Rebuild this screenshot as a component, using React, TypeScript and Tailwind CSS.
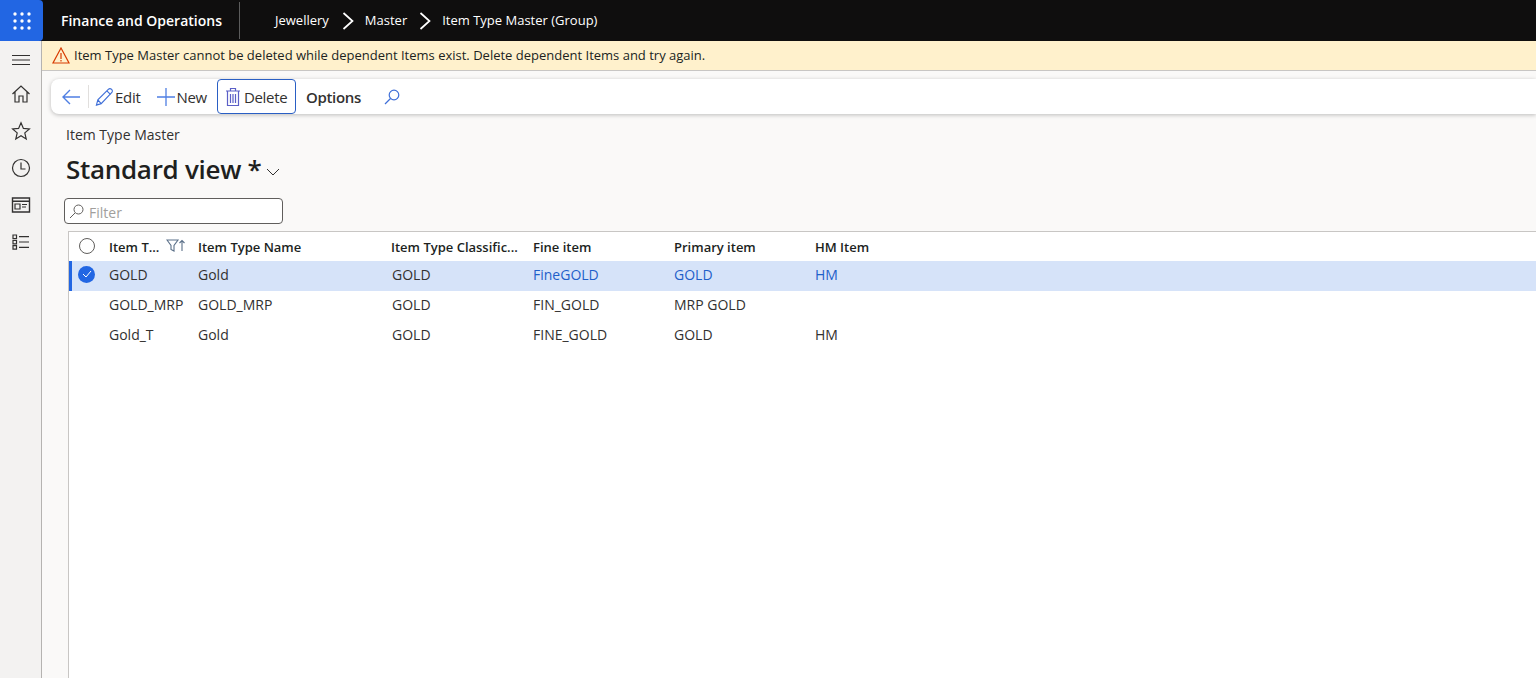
import React from 'react';

const rows = [
  { id: 'GOLD', name: 'Gold', cls: 'GOLD', fine: 'FineGOLD', primary: 'GOLD', hm: 'HM', selected: true },
  { id: 'GOLD_MRP', name: 'GOLD_MRP', cls: 'GOLD', fine: 'FIN_GOLD', primary: 'MRP GOLD', hm: '', selected: false },
  { id: 'Gold_T', name: 'Gold', cls: 'GOLD', fine: 'FINE_GOLD', primary: 'GOLD', hm: 'HM', selected: false },
];

const Waffle = () => (
  <svg width="18" height="18" viewBox="0 0 18 18" fill="#fff">
    {[2, 9, 16].map((y) => [2, 9, 16].map((x) => <circle key={`${x}-${y}`} cx={x} cy={y} r="1.7" />))}
  </svg>
);

const Chevron = () => (
  <svg width="12" height="20" viewBox="0 0 12 20" fill="none" stroke="#fff" strokeWidth="1.7">
    <path d="M1.5 2l9 8-9 8" />
  </svg>
);

const SideIcon = ({ children }: { children: React.ReactNode }) => (
  <div className="h-[37px] w-full flex items-center justify-center">
    <svg width="20" height="20" viewBox="0 0 20 20" fill="none" stroke="#323130" strokeWidth="1.2">
      {children}
    </svg>
  </div>
);

const Sidebar = () => (
  <div className="w-[42px] shrink-0 bg-[#f3f2f1] border-r border-[#b5b3b1] flex flex-col items-center">
    <div className="h-[31px] mt-[3px] w-full flex items-center justify-center">
      <svg width="20" height="12" viewBox="0 0 20 12" stroke="#323130" strokeWidth="1">
        <path d="M1 1.5h18M1 6h18M1 10.5h18" />
      </svg>
    </div>
    <SideIcon>
      <path d="M1.5 10L10 2l8.5 8M4 8v10h4v-6h4v6h4V8" />
    </SideIcon>
    <SideIcon>
      <path d="M10 1.8l2.4 5.6 6 .5-4.6 4 1.4 6L10 14.7l-5.2 3.2 1.4-6-4.6-4 6-.5z" />
    </SideIcon>
    <SideIcon>
      <circle cx="10" cy="10" r="8.5" />
      <path d="M10 4.5V11h4.5" />
    </SideIcon>
    <SideIcon>
      <path d="M1.5 3h17v14h-17zM1.5 6.2h17" strokeWidth="1.4" />
      <path d="M4 9h5v5H4zM11 9.5h5M11 12h4" />
    </SideIcon>
    <SideIcon>
      <path d="M2 3h3.5v3.5H2zM2 8.3h3.5v3.5H2zM2 13.6h3.5v3.5H2zM8 4.700h10M8 10h10M8 15.3h10" />
    </SideIcon>
  </div>
);

const Toolbar = () => (
  <div className="mt-[8px] ml-[9px] h-[35px] bg-white rounded-l-[8px] shadow-[0_1px_4px_rgba(0,0,0,0.25)] flex items-center text-[15px] tracking-[-0.3px] text-[#323130]">
    <div className="w-[37px] flex justify-end pr-[7px]">
      <svg width="20" height="18" viewBox="0 0 20 18" fill="none" stroke="#4f7fe3" strokeWidth="1.4">
        <path d="M19 9H2M9 2L2 9l7 7" />
      </svg>
    </div>
    <div className="w-px h-[23px] bg-[#e1dfdd]" />
    <div className="flex items-center ml-[6px]">
      <svg width="19" height="20" viewBox="0 0 20 20" fill="none" stroke="#3f6fd8" strokeWidth="1.2">
        <path d="M1.5 18.5l1.5-5.5L14 2c1-1 2.5-1 3.5 0s1 2.5 0 3.5L6.5 17zM3 13l3.5 4M12.5 3.5l4 4" />
      </svg>
      <span className="ml-px mt-px">Edit</span>
    </div>
    <div className="flex items-center ml-[17px]">
      <svg width="18" height="18" viewBox="0 0 18 18" stroke="#4f7fe3" strokeWidth="1.3">
        <path d="M0 9h18M9 0v18" />
      </svg>
      <span className="ml-px mt-px">New</span>
    </div>
    <div className="flex items-center ml-[10px] h-[35px] w-[79px] border border-[#2a5fc4] rounded-[4px] pl-[7px]">
      <svg width="16" height="20" viewBox="0 0 16 20" fill="none" stroke="#5b5fc7" strokeWidth="1.2">
        <path d="M1 4h14M5.5 4V1.5h5V4M2.500 4v14.500h11V4" />
        <path d="M5.5 7v9M8 7v9M10.500 7v9" />
      </svg>
      <span className="ml-[3px] mt-px">Delete</span>
    </div>
    <span className="ml-[10px] mt-[2px] font-semibold">Options</span>
    <div className="ml-[23px]">
      <svg width="16" height="16" viewBox="0 0 16 16" fill="none" stroke="#3f6fd8" strokeWidth="1.2">
        <circle cx="10" cy="6" r="4.8" />
        <path d="M6.5 9.5L1 15" />
      </svg>
    </div>
  </div>
);

const Grid = () => (
  <div className="mt-[7px] ml-[26px] flex-1 bg-white border-l border-t border-[#c8c6c4] text-[#323130]">
    <div className="h-[29px] pt-[2px] grid grid-cols-[40px_89px_193px_141px_141px_141px_1fr] items-center text-[13px] font-semibold text-[#201f1e]">
      <div className="pl-[10px] -mt-[3px]">
        <div className="w-[16px] h-[16px] rounded-full border border-[#605e5c]" />
      </div>
      <div className="flex relative">
        <span>Item T...</span>
        <svg className="absolute left-[57px] top-[1px]" width="20" height="13" viewBox="0 0 20 13" fill="none" stroke="#5b7089" strokeWidth="1.1">
          <path d="M1 1h11L8 6.5V12l-3-1.5v-4zM16 12V1.5M13.5 4L16 1.5 18.5 4" />
        </svg>
      </div>
      <div>Item Type Name</div>
      <div className="truncate">Item Type Classific...</div>
      <div className="pl-px">Fine item</div>
      <div className="pl-px">Primary item</div>
      <div className="pl-px">HM Item</div>
    </div>
    {rows.map((r) => (
      <div
        key={r.id}
        className={`h-[30px] pb-[4px] grid grid-cols-[37px_89px_193px_141px_141px_141px_1fr] items-center text-[14px] border-l-[3px] ${
          r.selected ? 'bg-[#d6e3f9] border-[#2266e3]' : 'border-transparent'
        }`}
      >
        <div className="pl-[6px]">
          {r.selected && (
            <div className="w-[17px] h-[17px] rounded-full bg-[#2266e3] flex items-center justify-center">
              <svg width="10" height="8" viewBox="0 0 10 8" fill="none" stroke="#fff" strokeWidth="1">
                <path d="M1 4l3 3 5-6" />
              </svg>
            </div>
          )}
        </div>
        <div>{r.id}</div>
        <div>{r.name}</div>
        <div className="pl-px">{r.cls}</div>
        <div className={`pl-px ${r.selected ? 'text-[#1f5fc9]' : ''}`}>{r.fine}</div>
        <div className={`pl-px ${r.selected ? 'text-[#1f5fc9]' : ''}`}>{r.primary}</div>
        <div className={`pl-px ${r.selected ? 'text-[#1f5fc9]' : ''}`}>{r.hm}</div>
      </div>
    ))}
  </div>
);

const App = () => {
  return (
    <div className="h-[678px] w-[1536px] overflow-hidden flex flex-col font-['Open_Sans',sans-serif]">
      <div className="h-[41px] bg-[#0f0e0e] flex items-center text-white shrink-0">
        <div className="w-[43px] h-[41px] bg-[#2266e3] rounded-r-[4px] flex items-center justify-center">
          <Waffle />
        </div>
        <div className="ml-[18px] text-[14px] font-semibold w-[178px] whitespace-nowrap">Finance and Operations</div>
        <div className="w-px h-[37px] bg-[#5c5c5c]" />
        <div className="ml-[35px] text-[13px]">Jewellery</div>
        <div className="ml-[13px]"><Chevron /></div>
        <div className="ml-[11px] text-[13px]">Master</div>
        <div className="ml-[12px]"><Chevron /></div>
        <div className="ml-[11px] text-[13px]">Item Type Master (Group)</div>
      </div>
      <div className="flex flex-1 min-h-0">
        <Sidebar />
        <div className="flex-1 flex flex-col bg-[#faf9f8] min-w-0">
          <div className="h-[30px] shrink-0 bg-[#fff1cc] border-b border-[#c8c6c4] flex items-center pl-[10px] text-[13px] text-[#201f1e]">
            <svg width="18" height="17" viewBox="0 0 18 17" fill="none" stroke="#d83b01" strokeWidth="1.2">
              <path d="M9 1L1 16h16zM9 6v6M9 13v1.5" />
            </svg>
            <span className="ml-[4px]">Item Type Master cannot be deleted while dependent Items exist. Delete dependent Items and try again.</span>
          </div>
          <Toolbar />
          <div className="ml-[24px] mt-[12px] text-[14px] leading-[18px] text-[#323130]">Item Type Master</div>
          <div className="ml-[24px] mt-[8px] h-[34px] flex items-center">
            <span className="text-[26px] font-semibold tracking-[-0.3px] text-[#201f1e]">Standard view *</span>
            <svg className="ml-[5px] mt-[6px]" width="14" height="9" viewBox="0 0 14 9" fill="none" stroke="#323130" strokeWidth="1">
              <path d="M1 1l6 6 6-6" />
            </svg>
          </div>
          <div className="ml-[22px] mt-[12px] w-[219px] h-[26px] bg-white border border-[#605e5c] rounded-[4px] flex items-center pl-[4px] text-[14px] text-[#a19f9d]">
            <svg width="15" height="15" viewBox="0 0 15 15" fill="none" stroke="#605e5c" strokeWidth="1">
              <circle cx="9.5" cy="5.5" r="4.5" />
              <path d="M6 9L1 14" />
            </svg>
            <span className="ml-[5px] mt-[2px]">Filter</span>
          </div>
          <Grid />
        </div>
      </div>
    </div>
  );
};

export default App;
